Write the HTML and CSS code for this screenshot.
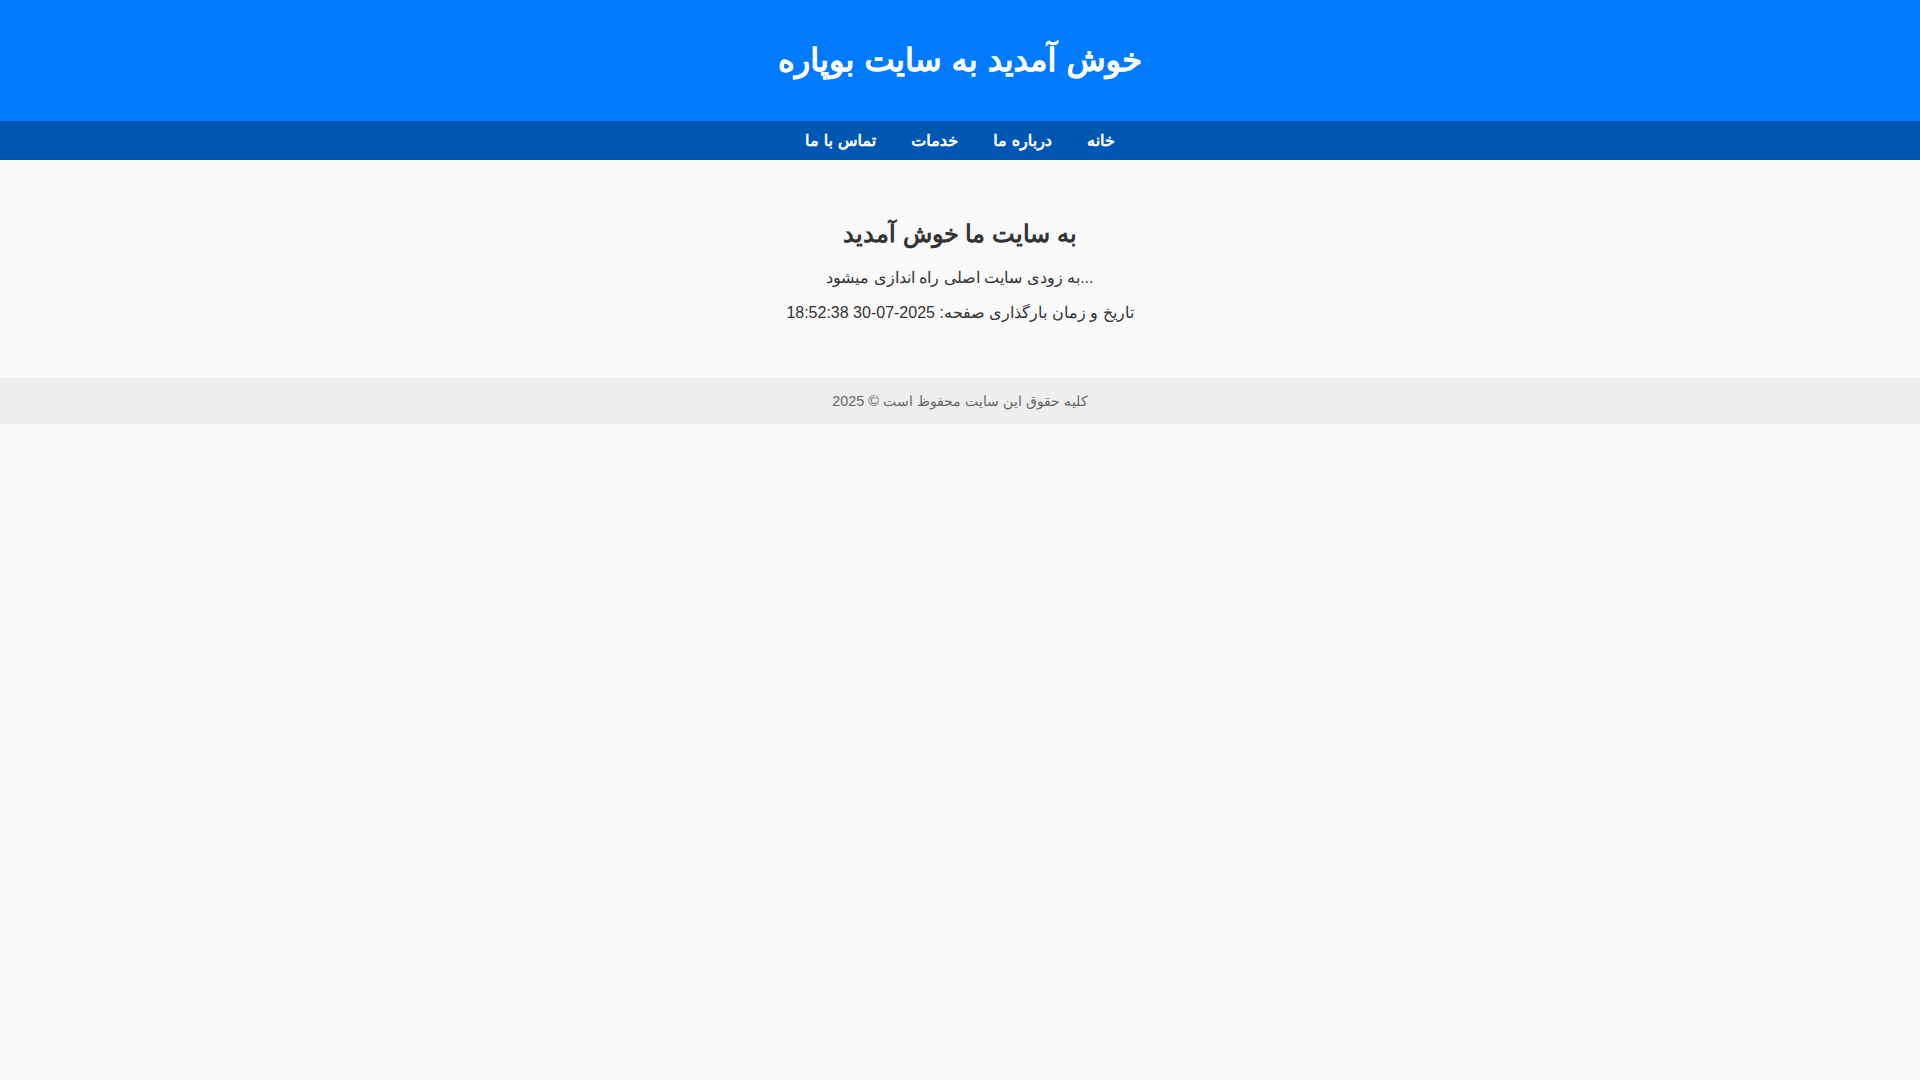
FILE: index.html
```html
<!DOCTYPE html>
<html lang="fa" dir="rtl">
<head>
<meta charset="utf-8">
<title>بوپاره</title>
<link rel="stylesheet" href="styles.css">
</head>
<body>
<header class="site-header">
  <h1 class="site-title">خوش آمدید به سایت بوپاره</h1>
</header>
<nav class="site-nav">
  <a href="#">خانه</a>
  <a href="#">درباره ما</a>
  <a href="#">خدمات</a>
  <a href="#">تماس با ما</a>
</nav>
<main class="content">
  <h2 class="content-title">به سایت ما خوش آمدید</h2>
  <p class="content-text">به زودی سایت اصلی راه اندازی میشود...</p>
  <p class="content-text">تاریخ و زمان بارگذاری صفحه: 2025-07-30 18:52:38</p>
</main>
<footer class="site-footer">
  <p class="footer-text">کلیه حقوق این سایت محفوظ است © 2025</p>
</footer>
</body>
</html>
```
FILE: styles.css
```css
body {
  margin: 0;
  background: #f9f9f9;
  color: #333;
  font-family: "Liberation Sans", Arial, sans-serif;
  direction: rtl;
}
.site-header {
  background: #007bff;
  color: #fff;
  padding: 20px;
  text-align: center;
}
.site-title {
  margin: 0.67em 0;
  font-size: 2em;
  font-family: "DejaVu Sans", sans-serif;
  font-weight: normal;
  -webkit-text-stroke: 1.3px #fff;
}
.site-nav {
  background: #0056b3;
  padding: 10px;
  text-align: center;
  font-family: "DejaVu Sans", sans-serif;
}
.site-nav a {
  color: #fff;
  text-decoration: none;
  margin: 0 15px;
  font-weight: normal;
  -webkit-text-stroke: 0.7px #fff;
}
.content {
  padding: 40px 20px;
  text-align: center;
  direction: ltr;
}
.content-title {
  margin: 20px 0;
  font-size: 1.5em;
}
.content-text {
  margin: 16px 0;
}
.site-footer {
  background: #eee;
  color: #666;
  text-align: center;
  padding: 15px;
}
.footer-text {
  margin: 0;
  font-size: 0.9em;
}
```
